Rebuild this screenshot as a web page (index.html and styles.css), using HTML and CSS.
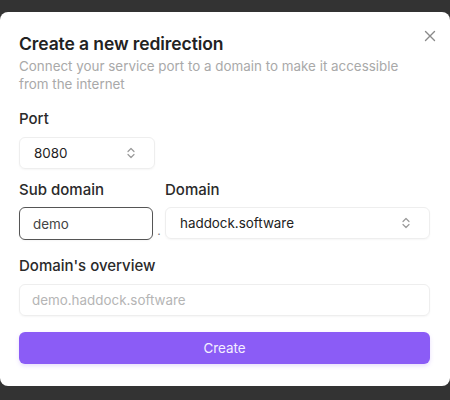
FILE: index.html
```html
<!DOCTYPE html>
<html lang="en">
<head>
    <meta charset="UTF-8">
    <meta name="viewport" content="width=device-width, initial-scale=1.0">
    <title>Create a new redirection</title>
    <link rel="stylesheet" href="styles.css">
</head>
<body>
    <div class="modal">
        <button class="close-button" aria-label="Close">
            <svg width="12" height="12" viewBox="0 0 12 12"><path d="M1.5 1.5 L10.5 10.5 M10.5 1.5 L1.5 10.5" stroke="#8a8a8a" stroke-width="1.4" stroke-linecap="round"/></svg>
        </button>
        <h2>Create a new redirection</h2>
        <p class="subtitle">Connect your service port to a domain to make it accessible from the internet</p>

        <label class="field-label">Port</label>
        <div class="select port-select">
            <span>8080</span>
            <svg class="chevrons" width="10" height="12" viewBox="0 0 10 12"><path d="M2 4.5 L5 1.5 L8 4.5 M2 7.5 L5 10.5 L8 7.5" fill="none" stroke="#9a9a9a" stroke-width="1.2" stroke-linecap="round" stroke-linejoin="round"/></svg>
        </div>

        <div class="domain-row">
            <div class="column sub-column">
                <label class="field-label">Sub domain</label>
                <div class="input active">demo</div>
            </div>
            <span class="dot">.</span>
            <div class="column domain-column">
                <label class="field-label">Domain</label>
                <div class="select">
                    <span>haddock.software</span>
                    <svg class="chevrons" width="10" height="12" viewBox="0 0 10 12"><path d="M2 4.5 L5 1.5 L8 4.5 M2 7.5 L5 10.5 L8 7.5" fill="none" stroke="#9a9a9a" stroke-width="1.2" stroke-linecap="round" stroke-linejoin="round"/></svg>
                </div>
            </div>
        </div>

        <label class="field-label">Domain's overview</label>
        <div class="input placeholder">demo.haddock.software</div>

        <button class="create-button">Create</button>
    </div>
</body>
</html>
```

FILE: styles.css
```css
body { margin: 0; background: #333333; font-family: Inter, "Noto Sans", sans-serif; color: #222; }
.modal { position: relative; background: white; margin-top: 12px; height: 374px; border-radius: 8px; padding: 21px 20px 0 19px; box-sizing: border-box; }
.close-button { position: absolute; top: 18px; right: 14px; background: none; border: none; padding: 0; cursor: pointer; }
h2 { margin: 0; font-size: 17.5px; font-weight: 600; color: #222; letter-spacing: -0.1px; }
.subtitle { margin: 3px 0 0; font-size: 13.4px; line-height: 18px; color: #a9a9a9; max-width: 395px; }
.field-label { display: block; font-size: 15px; font-weight: 500; color: #2a2a2a; margin-top: 16px; margin-bottom: 9px; }
.select, .input { display: flex; align-items: center; justify-content: space-between; box-sizing: border-box; height: 32px; border: 1px solid #eeeeee; border-radius: 6px; padding: 0 14px; font-size: 13.4px; color: #222; box-shadow: 0 1px 2px rgba(0, 0, 0, 0.04); }
.port-select { width: 136px; }
.port-select .chevrons { margin-right: 4px; }
.domain-row { display: flex; align-items: flex-start; }
.domain-row .field-label { margin-top: 11px; margin-bottom: 8px; }
.sub-column { width: 134px; }
.domain-column { flex: 1; }
.input.active { border: 1px solid #555; padding-left: 13px; height: 33px; color: #444; }
.dot { align-self: flex-end; width: 12px; text-align: center; font-size: 12px; color: #777; line-height: 10px; margin-bottom: 4px; }
.domain-column .select { margin-top: 1px; padding-right: 18px; }
.input.placeholder { color: #b5b5b5; padding-left: 12px; }
.create-button { display: block; width: 100%; height: 32px; margin-top: 16px; background: #8b5cf6; color: #f4efff; border: none; border-radius: 6px; font-family: inherit; font-size: 13.4px; cursor: pointer; box-shadow: 0 2px 4px rgba(139, 92, 246, 0.2); }
```
